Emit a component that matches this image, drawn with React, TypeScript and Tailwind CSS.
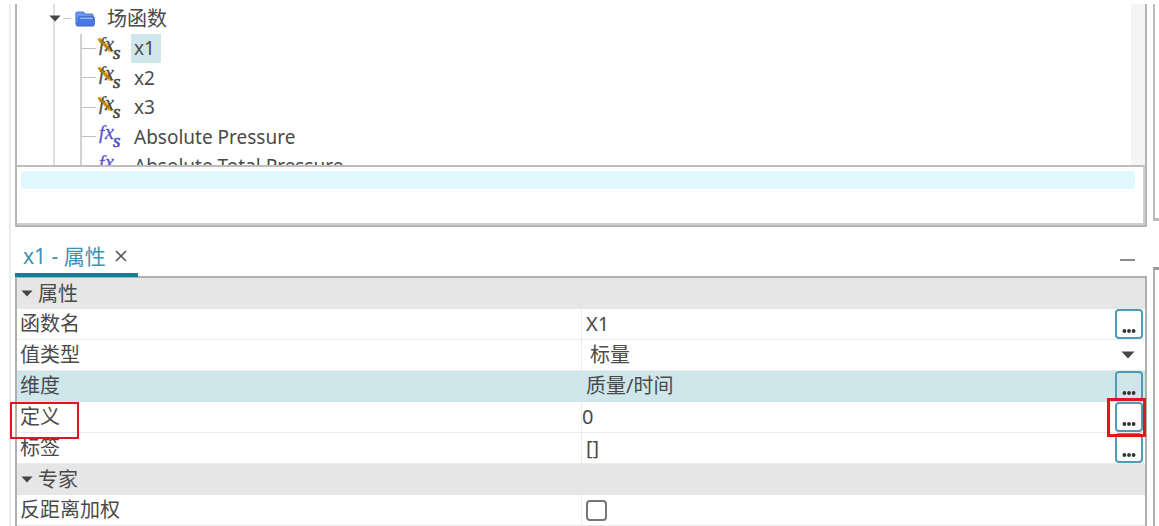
import { useState, type ReactNode } from 'react';

const functions = [
  { name: 'x1', custom: true },
  { name: 'x2', custom: true },
  { name: 'x3', custom: true },
  { name: 'Absolute Pressure', custom: false },
  { name: 'Absolute Total Pressure', custom: false },
];

function Caret({ className }: { className: string }) {
  return (
    <svg viewBox="0 0 14 8" className={className} aria-hidden="true">
      <path d="M0.5 0.5h13L7 7.5z" fill="#454545" />
    </svg>
  );
}

function FolderIcon() {
  return (
    <svg viewBox="0 0 20 16" className="h-4 w-5 shrink-0" aria-hidden="true">
      <path d="M1 12.500V2.500Q1 1 2.500 1H8L10 3H16.500Q18 3 18 4.500V12.500Z" fill="#6f97f0" stroke="#4a74dc" strokeWidth="1.200" />
      <path d="M4.800 5.800H18Q19.300 5.800 19.300 7V13.500Q19.300 15 17.800 15H3Q1.200 15 1.200 13.500L3.500 11V7Q3.500 5.800 4.800 5.800Z" fill="#4a78e6" stroke="#3a62d0" />
      <path d="M4.800 7.300H18" stroke="#9dbbf8" strokeWidth="1.300" />
    </svg>
  );
}

function FunctionIcon({ custom }: { custom: boolean }) {
  const ink = custom ? '#4a4a4a' : '#5352cc';
  return (
    <svg viewBox="0 0 25 25" className="size-[25px] shrink-0 overflow-visible" aria-hidden="true">
      {custom && <path d="M1 3L4 1.500L16 12.500L16.500 16.500L12.500 15.500Z" fill="#edb215" />}
      <g fill={ink} stroke={ink} strokeWidth="0.300" fontFamily="'Liberation Serif', serif" fontStyle="italic">
        <text x="3" y="15" fontSize="19">f</text>
        <text x="9" y="15" fontSize="20">x</text>
        <text x="17" y="23" fontSize="19" strokeWidth="0.700">s</text>
      </g>
      {custom && <path d="M3 3.500L13.500 13.500" stroke="#b98210" strokeWidth="1.800" />}
    </svg>
  );
}

function MoreButton({ label }: { label: string }) {
  return (
    <button
      type="button"
      aria-label={label}
      className="flex h-[30px] w-7 items-end justify-center rounded-[4px] border-2 border-[#4f9bb3] pb-1"
    >
      <svg viewBox="0 0 14 4" className="h-1 w-3.5" fill="#333" aria-hidden="true">
        <circle cx="2.400" cy="2" r="1.900" />
        <circle cx="7" cy="2" r="1.900" />
        <circle cx="11.600" cy="2" r="1.900" />
      </svg>
    </button>
  );
}

function Section({ title }: { title: string }) {
  return (
    <tr className="bg-[#e6e6e6]">
      <th colSpan={3} scope="colgroup" className="h-[31px] p-0 text-left font-normal">
        <span className="flex items-center gap-[5px] pl-1">
          <Caret className="h-[7px] w-3" />
          {title}
        </span>
      </th>
    </tr>
  );
}

type RowProps = {
  label: string;
  children?: ReactNode;
  action?: ReactNode;
  selected?: boolean;
  marked?: boolean;
  flush?: boolean;
};

function Row({ label, children, action, selected, marked, flush }: RowProps) {
  const line = selected ? 'border-[#cfe6eb]' : 'border-[#ebebeb]';
  return (
    <tr className={selected ? 'bg-[#cfe6eb]' : ''}>
      <th scope="row" className={`relative h-[31px] border-b p-0 pl-[3px] text-left font-normal ${line}`}>
        {label}
        {marked && <span className="absolute -left-[7px] top-0 z-10 h-[37px] w-[69px] border-2 border-[#e0151d]" />}
      </th>
      <td className={`h-[31px] border-b border-l p-0 ${flush ? 'pl-0' : 'pl-1'} ${line}`} colSpan={action ? 1 : 2}>
        {children}
      </td>
      {action && (
        <td className={`relative h-[31px] border-b p-0 ${line}`}>
          {action}
          {marked && <span className="absolute -left-2 -top-1 z-10 h-[39px] w-[39px] border-[3px] border-[#e0151d]" />}
        </td>
      )}
    </tr>
  );
}

function FunctionTree() {
  const [selected, setSelected] = useState('x1');
  return (
    <div className="flex h-[161px] overflow-hidden">
      <div className="ml-[36px] h-[177px] grow border-l-2 border-[#dedede]">
        <ul className="grid h-full auto-rows-fr">
          <li className="relative flex items-center">
            <Caret className="absolute -left-[7px] h-[7px] w-3.5" />
            <span className="ml-2 mr-1 h-px w-2 bg-[#c8c8c8]" />
            <FolderIcon />
            <span className="ml-3">场函数</span>
          </li>
          {functions.map((fn) => (
            <li key={fn.name} className="ml-[25px] flex items-center border-l-2 border-[#d2d2d2]">
              <span className="h-px w-3.5 bg-[#c0c0c0]" />
              <FunctionIcon custom={fn.custom} />
              <button
                type="button"
                onClick={() => setSelected(fn.name)}
                className={`ml-2.5 flex h-[29px] items-center pl-[3px] pr-1.5 text-[19px] ${selected === fn.name ? 'bg-[#cfe6eb]' : ''}`}
              >
                {fn.name}
              </button>
            </li>
          ))}
        </ul>
      </div>
      <div className="w-3.5 bg-[#f5f5f5]" />
    </div>
  );
}

export default function App() {
  const [checked, setChecked] = useState(false);
  return (
    <div className="flex h-screen overflow-hidden bg-white pl-[9px] pt-1 font-['Noto_Sans','Noto_Sans_CJK_SC',sans-serif] text-[20px] leading-7 text-[#4a4a4a]">
      <main className="flex min-w-0 grow flex-col border-l-2 border-[#ececec] pl-1">
        <section className="border-x-2 border-b-2 border-[#b5b5b5]">
          <FunctionTree />
          <div className="border-b-2 border-r-2 border-t-2 border-[#d0d0d0] border-t-[#bdbdbd] pl-1 pr-2 pt-1">
            <div className="mb-[34px] h-[18px] rounded-[3px] bg-[#e1f9fe]" />
          </div>
        </section>
        <section className="mt-3">
          <header className="flex items-start justify-between">
            <div className="z-10 flex h-[38px] items-center gap-2 border-b-4 border-[#0f809b] pl-2 pr-2.5 text-[21px] text-[#3d93b0]">
              <h2>x1 - 属性</h2>
              <button type="button" aria-label="关闭">
                <svg viewBox="0 0 14 14" className="size-3.5" stroke="#555" strokeWidth="1.600" aria-hidden="true">
                  <path d="M2 2l10 10M12 2L2 12" />
                </svg>
              </button>
            </div>
            <button type="button" aria-label="最小化" className="mr-3 mt-[17px] flex h-2 w-[15px] items-center">
              <span className="h-0.5 w-full bg-[#8c8c8c]" />
            </button>
          </header>
          <div className="-mt-px border-x-2 border-t-2 border-[#b0b0b0]">
            <table className="w-full table-fixed border-separate border-spacing-0">
              <colgroup>
                <col className="w-1/2" />
                <col />
                <col className="w-[30px]" />
              </colgroup>
              <tbody>
                <Section title="属性" />
                <Row label="函数名" action={<MoreButton label="编辑函数名" />}>X1</Row>
                <Row label="值类型">
                  <div className="relative flex items-center">
                    <select aria-label="值类型" className="h-7 w-full appearance-none bg-transparent pl-1 outline-none">
                      <option>标量</option>
                    </select>
                    <Caret className="pointer-events-none absolute right-2.5 h-2 w-3.5" />
                  </div>
                </Row>
                <Row label="维度" selected action={<MoreButton label="编辑维度" />}>质量/时间</Row>
                <Row label="定义" marked flush action={<MoreButton label="编辑定义" />}>0</Row>
                <Row label="标签" action={<MoreButton label="编辑标签" />}>[]</Row>
                <Section title="专家" />
                <Row label="反距离加权">
                  <input
                    type="checkbox"
                    aria-label="反距离加权"
                    checked={checked}
                    onChange={(e) => setChecked(e.target.checked)}
                    className="block size-[21px] appearance-none rounded-[4px] border-2 border-[#777] checked:bg-[#0f809b]"
                  />
                </Row>
                <Row label="" action={<MoreButton label="更多" />} />
              </tbody>
            </table>
          </div>
        </section>
      </main>
      <aside className="ml-1.5 flex w-1.5 shrink-0 flex-col">
        <div className="h-[217px] border-b-[3px] border-l-2 border-[#bababa]" />
        <div className="mt-[46px] grow border-l-2 border-t-[3px] border-[#b0b0b0] border-t-[#999]" />
      </aside>
    </div>
  );
}
